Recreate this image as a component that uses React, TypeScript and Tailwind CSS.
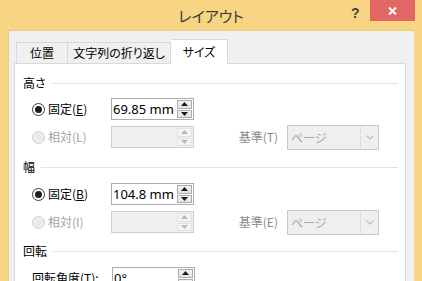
import type { ReactNode } from "react";

const jp = "font-['Noto_Sans_CJK_JP',sans-serif] [font-feature-settings:'palt']";
const num = "font-['Noto_Sans','Noto_Sans_CJK_JP',sans-serif]";

function Arrow({ up, disabled }: { up: boolean; disabled?: boolean }) {
  return (
    <svg width="7" height="4" viewBox="0 0 7 4" className="block">
      <polygon
        points={up ? "3.5,0 7,4 0,4" : "0,0 7,0 3.5,4"}
        fill={disabled ? "#b8b8b8" : "#1a1a1a"}
      />
    </svg>
  );
}

function Spin({ value, disabled }: { value?: string; disabled?: boolean }) {
  return (
    <div
      className={`flex h-[22px] w-[83px] border ${
        disabled ? "border-[#cfcfcf] bg-[#f0f0f0]" : "border-[#abadb3] bg-white"
      }`}
    >
      <div className={`flex-1 pl-[1px] text-[13px] leading-[20px] text-black ${num}`}>{value}</div>
      <div className="flex w-[17px] flex-col gap-[1px] p-[1px]">
        {[true, false].map((up) => (
          <div
            key={String(up)}
            className={`flex flex-1 items-center justify-center border ${
              disabled
                ? "border-[#e2e2e2] bg-[#f4f4f4]"
                : "border-[#acacac] bg-gradient-to-b from-[#f2f2f2] to-[#e4e4e4]"
            }`}
          >
            <Arrow up={up} disabled={disabled} />
          </div>
        ))}
      </div>
    </div>
  );
}

function Radio({ checked, disabled }: { checked?: boolean; disabled?: boolean }) {
  return (
    <span
      className={`flex h-[13px] w-[13px] items-center justify-center rounded-full border ${
        disabled ? "border-[#d2d2d2] bg-[#ececec]" : "border-[#3c3c3c] bg-white"
      }`}
    >
      {checked && <span className="h-[7px] w-[7px] rounded-full bg-[#1e1e1e]" />}
    </span>
  );
}

function Select({ label }: { label: ReactNode }) {
  return (
    <div className="ml-auto flex items-center">
      <span className="mr-[9px] text-[12px] text-[#8a8a8a]">{label}</span>
      <div className="flex h-[25px] w-[92px] border border-[#c8c8c8] bg-[#efefef]">
        <span className="flex-1 pl-[3px] text-[12px] leading-[23px] text-[#a5a5a5]">ページ</span>
        <div className="flex w-[18px] items-center justify-center border-l border-[#dddddd]">
          <svg width="8" height="5" viewBox="0 0 8 5">
            <polyline points="0.5,0.5 4,4 7.5,0.5" fill="none" stroke="#c4c4c4" strokeWidth="1.3" />
          </svg>
        </div>
      </div>
      <div className="w-[26px]" />
    </div>
  );
}

function Header({ text, className }: { text: string; className: string }) {
  return (
    <div className={`flex h-[16px] items-center gap-[6px] pl-[8px] pr-[7px] ${className}`}>
      <span className="text-[12px] leading-none text-black">{text}</span>
      <div className="h-px flex-1 bg-[#e3e3e3]" />
    </div>
  );
}

function Row({
  checked,
  disabled,
  label,
  value,
  select,
  className,
}: {
  checked?: boolean;
  disabled?: boolean;
  label: ReactNode;
  value?: string;
  select?: ReactNode;
  className: string;
}) {
  return (
    <div className={`flex h-[22px] items-center pl-[17px] ${className}`}>
      <Radio checked={checked} disabled={disabled} />
      <span className={`ml-[3px] w-[63px] text-[12px] ${disabled ? "text-[#a3a3a3]" : "text-black"}`}>
        {label}
      </span>
      <Spin value={value} disabled={disabled} />
      {select}
    </div>
  );
}

export default function App() {
  return (
    <div className={`flex h-[281px] w-[422px] flex-col overflow-hidden bg-[#f7d582] ${jp}`}>
      <div className="relative h-[30px] shrink-0">
        <div className="pt-[5px] text-center text-[15px] text-[#3a3a3a]">レイアウト</div>
        <span className="absolute left-[351px] top-[3px] font-['Liberation_Sans',sans-serif] text-[14px] font-bold text-[#444]">
          ?
        </span>
        <div className="absolute right-[7px] top-0 flex h-[21px] w-[45px] items-center justify-center bg-[#e06763]">
          <svg width="9" height="8" viewBox="0 0 9 8">
            <path d="M1 0.5 L8 7.5 M8 0.5 L1 7.5" stroke="white" strokeWidth="2" />
          </svg>
        </div>
      </div>

      <div className="mx-[8px] flex-1 border-l border-t border-[#e7cd84] bg-[#f0f0f0] pl-[5px] pr-[8px] pt-[8px]">
        <div className="flex h-[24px] items-end pl-[2px] text-[12px] text-black">
          <div className="flex h-[21px] w-[52px] items-center justify-center border border-b-0 border-[#d9d9d9] bg-[#f0f0f0]">
            位置
          </div>
          <div className="flex h-[21px] w-[103px] items-center justify-center border border-b-0 border-l-0 border-[#d9d9d9] bg-[#f0f0f0]">
            文字列の折り返し
          </div>
          <div className="relative z-10 mb-[-1px] flex h-[25px] w-[57px] items-center justify-center border border-b-0 border-l-0 border-[#d9d9d9] bg-white">
            サイズ
          </div>
        </div>

        <div className="h-[240px] border border-[#d9d9d9] bg-white">
          <Header text="高さ" className="mt-[11px]" />
          <Row
            checked
            label={
              <>
                固定(<span className="underline">E</span>)
              </>
            }
            value="69.85 mm"
            className="mt-[7px]"
          />
          <Row disabled label="相対(L)" className="mt-[6px]" select={<Select label="基準(T)" />} />

          <Header text="幅" className="mt-[11px]" />
          <Row
            checked
            label={
              <>
                固定(<span className="underline">B</span>)
              </>
            }
            value="104.8 mm"
            className="mt-[8px]"
          />
          <Row disabled label="相対(I)" className="mt-[6px]" select={<Select label="基準(E)" />} />

          <Header text="回転" className="mt-[10px]" />
          <div className="mt-[8px] flex h-[22px] items-center pl-[17px]">
            <span className="w-[80px] text-[12px] text-black">回転角度(T):</span>
            <Spin value="0°" />
          </div>
        </div>
      </div>
    </div>
  );
}
